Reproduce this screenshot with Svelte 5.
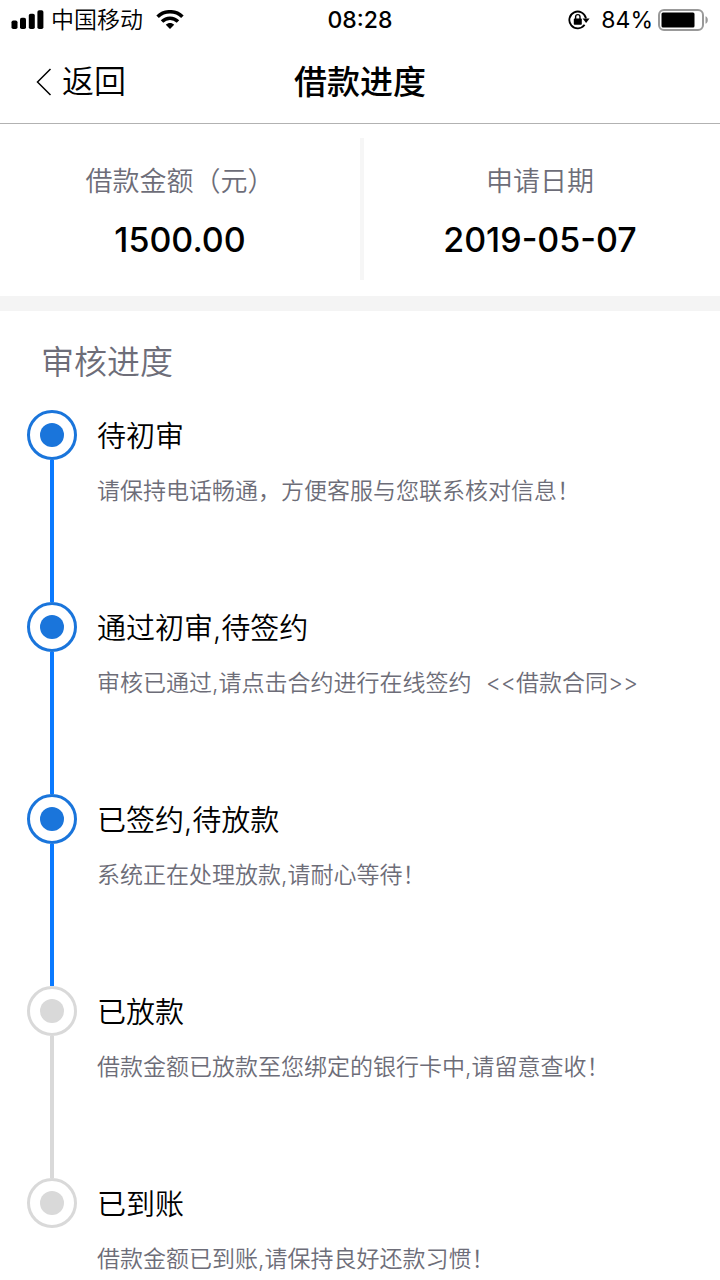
<script lang="ts">
  interface Step {
    title: string;
    desc: string;
    link?: string;
    done: boolean;
  }

  const summary = [
    { label: '借款金额（元）', value: '1500.00' },
    { label: '申请日期', value: '2019-05-07' },
  ];

  const steps: Step[] = [
    { title: '待初审', desc: '请保持电话畅通，方便客服与您联系核对信息！', done: true },
    {
      title: '通过初审,待签约',
      desc: '审核已通过,请点击合约进行在线签约',
      link: '<<借款合同>>',
      done: true,
    },
    { title: '已签约,待放款', desc: '系统正在处理放款,请耐心等待！', done: true },
    { title: '已放款', desc: '借款金额已放款至您绑定的银行卡中,请留意查收！', done: false },
    { title: '已到账', desc: '借款金额已到账,请保持良好还款习惯！', done: false },
  ];
</script>

<div class="page">
  <div class="status-bar">
    <div class="status-left">
      <svg width="33" height="20" viewBox="0 0 33 20" aria-hidden="true">
        <rect x="0.5" y="10.5" width="6" height="8.5" rx="1.8" />
        <rect x="9" y="7.8" width="6" height="11.2" rx="1.8" />
        <rect x="17.8" y="3.8" width="6" height="15.2" rx="1.8" />
        <rect x="26.4" y="0.2" width="6" height="18.8" rx="1.8" />
      </svg>
      <span class="carrier">中国移动</span>
      <svg width="28" height="20" viewBox="0 0 28 20" aria-hidden="true">
        <g fill="none" stroke="#000" stroke-width="3.6">
          <path d="M1.6 6.7C8.3 0.1 19.7 0.1 26.4 6.7" />
          <path d="M6 11.5C10.6 7.1 17.4 7.1 22 11.5" />
        </g>
        <path d="M14 18.9L9.8 14.7C12.2 12.4 15.8 12.4 18.2 14.7Z" />
      </svg>
    </div>
    <span class="clock">08:28</span>
    <div class="status-right">
      <svg width="22" height="20" viewBox="0 0 22 20" aria-hidden="true">
        <path
          d="M16.6 14.8A8.4 8.4 0 1 1 18 8.4"
          fill="none"
          stroke="#000"
          stroke-width="1.8"
        />
        <path d="M14.6 8.6H21.6L18.1 13Z" />
        <rect x="5.8" y="8.6" width="8" height="6.2" rx="0.8" />
        <path d="M7.6 9V6.8a2.2 2.2 0 0 1 4.4 0V9" fill="none" stroke="#000" stroke-width="1.4" />
      </svg>
      <span class="percent">84%</span>
      <svg width="51" height="22" viewBox="0 0 51 22" aria-hidden="true">
        <rect x="1" y="1" width="44" height="20" rx="5" fill="none" stroke="#999" stroke-width="2" />
        <rect x="3.5" y="3.5" width="33" height="15" rx="1.5" />
        <path d="M47.5 7.2C50.6 8.4 50.6 13.6 47.5 14.8Z" fill="#999" />
      </svg>
    </div>
  </div>

  <header class="nav">
    <button class="back" type="button">
      <svg width="16" height="28" viewBox="0 0 16 28" aria-hidden="true">
        <path d="M14.5 1L1.5 14L14.5 27" fill="none" stroke="#000" stroke-width="1.5" />
      </svg>
      返回
    </button>
    <h1>借款进度</h1>
  </header>

  <dl class="summary">
    {#each summary as item}
      <div class="summary-item">
        <dt>{item.label}</dt>
        <dd>{item.value}</dd>
      </div>
    {/each}
  </dl>

  <section class="progress">
    <h2>审核进度</h2>
    <ol>
      {#each steps as step, i}
        <li class:done={step.done}>
          <div class="track">
            <span class="dot"></span>
            {#if i < steps.length - 1}
              <span class="line"></span>
            {/if}
          </div>
          <div class="content">
            <h3>{step.title}</h3>
            <p>
              {step.desc}
              {#if step.link}
                <a href="#contract">{step.link}</a>
              {/if}
            </p>
          </div>
        </li>
      {/each}
    </ol>
  </section>
</div>

<style>
  :global(body) {
    margin: 0;
    background: #fff;
  }

  .page {
    overflow: hidden;
    background: #fff;
    color: #000;
    font-family: Inter, 'Noto Sans CJK SC', sans-serif;
  }

  h1,
  h2,
  h3,
  p,
  dl,
  dd,
  ol {
    margin: 0;
    padding: 0;
  }

  svg {
    flex: none;
  }

  .status-bar {
    display: grid;
    grid-template-columns: 1fr auto 1fr;
    align-items: center;
    height: 40px;
    padding: 0 11px;
    font-size: 23px;
    line-height: 32px;
  }

  .status-left,
  .status-right {
    display: flex;
    align-items: center;
  }

  .status-left {
    gap: 7px;
  }

  .carrier {
    margin-right: 6px;
    font-weight: 350;
  }

  .clock {
    font-weight: 500;
  }

  .status-right {
    justify-content: flex-end;
    gap: 5px;
  }

  .percent {
    margin-left: 6px;
  }

  .nav {
    display: grid;
    grid-template-columns: 1fr auto 1fr;
    align-items: center;
    height: 83px;
    padding: 0 36px;
    border-bottom: 1px solid #b2b2b2;
  }

  .back {
    display: flex;
    align-items: center;
    justify-self: start;
    gap: 10px;
    padding: 0;
    border: 0;
    background: none;
    color: inherit;
    font-family: inherit;
    font-size: 32px;
    font-weight: 350;
    line-height: 48px;
    cursor: pointer;
  }

  h1 {
    font-size: 33px;
    font-weight: 500;
    line-height: 48px;
  }

  .summary {
    display: grid;
    grid-template-columns: 1fr 1fr;
    padding: 14px 0 16px;
    border-bottom: 15px solid #f4f4f4;
  }

  .summary-item {
    padding: 24px 0 16px;
    text-align: center;
  }

  .summary-item + .summary-item {
    box-shadow: inset 4px 0 #f6f6f6;
  }

  dt {
    color: #6d6d78;
    font-size: 27px;
    font-weight: 350;
    line-height: 40px;
  }

  dd {
    margin-top: 14px;
    font-size: 34px;
    font-weight: 500;
    line-height: 48px;
  }

  .progress {
    padding: 27px 27px 0;
  }

  h2 {
    margin: 0 0 24px 14px;
    color: #6d6d78;
    font-size: 33px;
    font-weight: 350;
    line-height: 48px;
  }

  ol {
    list-style: none;
  }

  li {
    display: flex;
    gap: 20px;
    color: #d9d9d9;
  }

  .done {
    color: #1a75db;
  }

  .track {
    display: flex;
    flex: none;
    flex-direction: column;
    align-items: center;
  }

  .dot {
    display: flex;
    align-items: center;
    justify-content: center;
    box-sizing: border-box;
    width: 50px;
    height: 50px;
    border: 3px solid currentColor;
    border-radius: 50%;
  }

  .dot::after {
    width: 24px;
    height: 24px;
    border-radius: 50%;
    background: currentColor;
    content: '';
  }

  .line {
    flex: 1;
    width: 4px;
    background: #d9d9d9;
  }

  .done .line {
    background: #0a7aff;
  }

  .content {
    flex: 1;
    padding: 2px 0 95px;
  }

  li:last-child .content {
    padding-bottom: 0;
  }

  h3 {
    color: #000;
    font-size: 29px;
    font-weight: 350;
    line-height: 50px;
  }

  p {
    margin-top: 13px;
    color: #6d6d78;
    font-size: 23px;
    font-weight: 350;
    line-height: 32px;
  }

  a {
    margin-left: 8px;
    color: inherit;
    text-decoration: none;
  }
</style>
